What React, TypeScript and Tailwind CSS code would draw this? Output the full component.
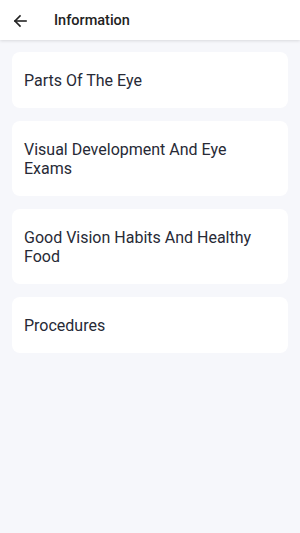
import React from "react";

const items = [
  "Parts Of The Eye",
  "Visual Development And Eye Exams",
  "Good Vision Habits And Healthy Food",
  "Procedures",
];

export default function App() {
  return (
    <div
      className="min-h-[533px] w-[300px] bg-[#f6f7fb]"
      style={{ fontFamily: "Roboto, 'Noto Sans', sans-serif" }}
    >
      <div className="flex h-10 items-center bg-white pt-[2px] shadow-[0_1px_3px_rgba(0,0,0,0.12)]">
        <div className="flex w-[54px] items-center pl-[13px]">
          <svg width="14" height="14" viewBox="0 0 14 14" fill="none" stroke="#222" strokeWidth="1.6" strokeLinecap="square">
            <path d="M13 7H2" />
            <path d="M7 2L2 7l5 5" />
          </svg>
        </div>
        <span className="text-[14.5px] font-medium text-[#222]">Information</span>
      </div>
      <div className="flex flex-col gap-[13px] px-3 pt-3">
        {items.map((t) => (
          <div
            key={t}
            className="rounded-lg bg-white px-3 pt-[19px] pb-[18px] text-[16px] leading-[19px] text-[#272a36]"
          >
            {t}
          </div>
        ))}
      </div>
    </div>
  );
}
